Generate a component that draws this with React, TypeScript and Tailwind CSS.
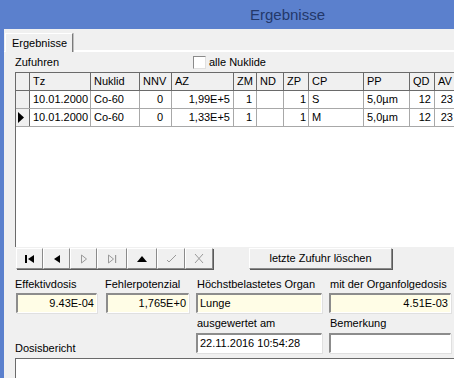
import React from "react";

const cols = [
  { w: 61, h: "Tz", a: "l" },
  { w: 49, h: "Nuklid", a: "l" },
  { w: 32, h: "NNV", a: "r" },
  { w: 62, h: "AZ", a: "r" },
  { w: 23, h: "ZM", a: "r" },
  { w: 27, h: "ND", a: "r" },
  { w: 25, h: "ZP", a: "r" },
  { w: 55, h: "CP", a: "l" },
  { w: 46, h: "PP", a: "l" },
  { w: 25, h: "QD", a: "r" },
  { w: 20, h: "AV", a: "r" },
];

const rows = [
  ["10.01.2000", "Co-60", "0", "1,99E+5", "1", "", "1", "S", "5,0µm", "12", "23"],
  ["10.01.2000", "Co-60", "0", "1,33E+5", "1", "", "1", "M", "5,0µm", "12", "23"],
];

const pads = ["pl-[3px]", "pl-[3px]", "pr-[8px]", "pr-[3px]", "pr-[4px]", "pr-[3px]", "pr-[2px]", "pl-[3px]", "pl-[3px]", "pr-[3px]", "pr-[1px]"];

function NavBtn({ w, children }: { w: number; children: React.ReactNode }) {
  return (
    <div
      className="h-[21px] flex items-center justify-center bg-[#f0f0f0] border border-t-white border-l-white border-b-[#8a8a8a] border-r-[#8a8a8a] shadow-[1px_1px_0_#5a5a5a]"
      style={{ width: w }}
    >
      {children}
    </div>
  );
}

function Field({ w, value, yellow, right }: { w: number; value: string; yellow?: boolean; right?: boolean }) {
  return (
    <div
      className={`h-[20px] flex items-center border-t-2 border-l-2 border-t-[#8c8c8c] border-l-[#8c8c8c] border-b border-r border-b-white border-r-white shadow-[1px_1px_0_#e0e0e0] px-[2px] ${yellow ? "bg-[#fffde6]" : "bg-white"} ${right ? "justify-end" : ""}`}
      style={{ width: w }}
    >
      <span className="whitespace-nowrap">{value}</span>
    </div>
  );
}

export default function App() {
  const grey = "#9a9a9a";
  return (
    <div
      className="w-[454px] h-[378px] overflow-hidden bg-[#f0f0f0] text-black text-[11px] flex flex-col"
      style={{ fontFamily: '"Liberation Sans", Arial, sans-serif' }}
    >
      {/* title bar */}
      <div className="h-[29px] shrink-0 bg-[#5b80cd] flex items-center pl-[250px] pt-[1px]">
        <span className="text-[15px] text-[#23386a]">Ergebnisse</span>
      </div>
      <div className="flex-1 flex flex-col border-l-4 border-[#5b80cd] min-h-0">
        {/* tab row */}
        <div className="h-[22px] shrink-0 flex items-end pt-[3px]">
          <div className="h-[19px] w-[68px] ml-[1px] border-t border-l border-white border-r border-r-[#7a7a7a] shadow-[1px_0_0_#c0c0c0] flex items-center pl-[6px] relative top-[1px] bg-[#f0f0f0] z-10">
            Ergebnisse
          </div>
          <div className="flex-1 border-b border-white h-full" />
        </div>
        <div className="border-t border-white h-0" />
        {/* Zufuhren row */}
        <div className="h-[20px] shrink-0 flex items-center pl-[11px]">
          <span className="w-[178px]">Zufuhren</span>
          <div className="w-[13px] h-[13px] bg-white border border-t-[#8a8a8a] border-l-[#8a8a8a] border-b-[#e0e0e0] border-r-[#e0e0e0] mr-[3px]" />
          <span>alle Nuklide</span>
        </div>
        {/* grid */}
        <div className="ml-[11px] h-[175px] shrink-0 bg-white border-t border-l border-t-[#6a6a6a] border-l-[#6a6a6a] flex flex-col overflow-hidden">
          <div className="flex h-[18px] shrink-0 bg-[#f0f0f0] border-b border-[#6a6a6a]">
            <div className="w-[14px] shrink-0 border-r border-[#6a6a6a]" />
            {cols.map((c, i) => (
              <div
                key={i}
                className="shrink-0 border-r border-[#6a6a6a] flex items-center pl-[3px]"
                style={{ width: c.w }}
              >
                {c.h}
              </div>
            ))}
          </div>
          {rows.map((r, ri) => (
            <div key={ri} className="flex h-[18px] shrink-0 border-b border-[#a8a8a8]">
              <div className="w-[14px] shrink-0 bg-[#f0f0f0] border-r border-[#6a6a6a] flex items-center pl-[2px]">
                {ri === 1 && (
                  <svg width="7" height="11" viewBox="0 0 7 11">
                    <path d="M0 0 L6 5.5 L0 11 Z" fill="#000" />
                  </svg>
                )}
              </div>
              {r.map((v, ci) => (
                <div
                  key={ci}
                  className={`shrink-0 border-r border-[#a8a8a8] flex items-center whitespace-nowrap ${cols[ci].a === "r" ? "justify-end" : ""} ${pads[ci]}`}
                  style={{ width: cols[ci].w }}
                >
                  {v}
                </div>
              ))}
            </div>
          ))}
          <div className="flex flex-1">
            <div className="w-[14px] shrink-0" />
          </div>
        </div>
        {/* buttons */}
        <div className="h-[22px] shrink-0 flex pl-[12px] mt-[1px]">
          <NavBtn w={27}>
            <svg width="9" height="8" viewBox="0 0 9 8">
              <rect x="0" y="0" width="2" height="8" fill="#000" />
              <path d="M9 0 L3 4 L9 8 Z" fill="#000" />
            </svg>
          </NavBtn>
          <NavBtn w={27}>
            <svg width="7" height="8" viewBox="0 0 7 8">
              <path d="M7 0 L1 4 L7 8 Z" fill="#000" />
            </svg>
          </NavBtn>
          <NavBtn w={27}>
            <svg width="8" height="10" viewBox="0 0 8 10">
              <path d="M1.5 1 L6.5 5 L1.5 9 Z" fill="none" stroke={grey} strokeWidth="1" />
            </svg>
          </NavBtn>
          <NavBtn w={30}>
            <svg width="11" height="10" viewBox="0 0 11 10">
              <path d="M1.5 1 L6.5 5 L1.5 9 Z" fill="none" stroke={grey} strokeWidth="1" />
              <rect x="8" y="1" width="1.2" height="8" fill={grey} />
            </svg>
          </NavBtn>
          <NavBtn w={30}>
            <svg width="10" height="6" viewBox="0 0 10 6">
              <path d="M0 6 L5 0 L10 6 Z" fill="#000" />
            </svg>
          </NavBtn>
          <NavBtn w={28}>
            <svg width="11" height="9" viewBox="0 0 11 9">
              <path d="M1 6 L3 8 L10 1" fill="none" stroke={grey} strokeWidth="1" />
            </svg>
          </NavBtn>
          <NavBtn w={28}>
            <svg width="10" height="11" viewBox="0 0 10 11">
              <path d="M1 1 L9 10 M9 1 L1 10" fill="none" stroke={grey} strokeWidth="1" />
            </svg>
          </NavBtn>
          <div className="ml-[36px]">
            <NavBtn w={143}>
              <span>letzte Zufuhr löschen</span>
            </NavBtn>
          </div>
        </div>
        {/* label row 1 */}
        <div className="h-[16px] shrink-0 flex items-end pl-[11px] mt-[7px] pb-[1px]">
          <span className="w-[90px]">Effektivdosis</span>
          <span className="w-[92px]">Fehlerpotenzial</span>
          <span className="w-[133px]">Höchstbelastetes Organ</span>
          <span>mit der Organfolgedosis</span>
        </div>
        <div className="h-[20px] shrink-0 flex pl-[12px]">
          <div className="w-[90px]">
            <Field w={81} value="9.43E-04" yellow right />
          </div>
          <div className="w-[90px]">
            <Field w={83} value="1,765E+0" yellow right />
          </div>
          <div className="w-[133px]">
            <Field w={126} value="Lunge" yellow />
          </div>
          <Field w={122} value="4.51E-03" yellow right />
        </div>
        {/* row 2 */}
        <div className="h-[20px] shrink-0 flex items-end pl-[193px] mt-[0px] pb-[2px]">
          <span className="w-[133px]">ausgewertet am</span>
          <span>Bemerkung</span>
        </div>
        <div className="h-[20px] shrink-0 flex pl-[11px]">
          <div className="w-[181px] flex items-end">
            <span className="relative top-[3px]">Dosisbericht</span>
          </div>
          <div className="w-[133px]">
            <Field w={126} value="22.11.2016 10:54:28" />
          </div>
          <Field w={122} value="" />
        </div>
        <div className="mt-[5px] ml-[11px] flex-1 bg-white border-t border-l border-t-[#6a6a6a] border-l-[#6a6a6a]" />
      </div>
    </div>
  );
}
